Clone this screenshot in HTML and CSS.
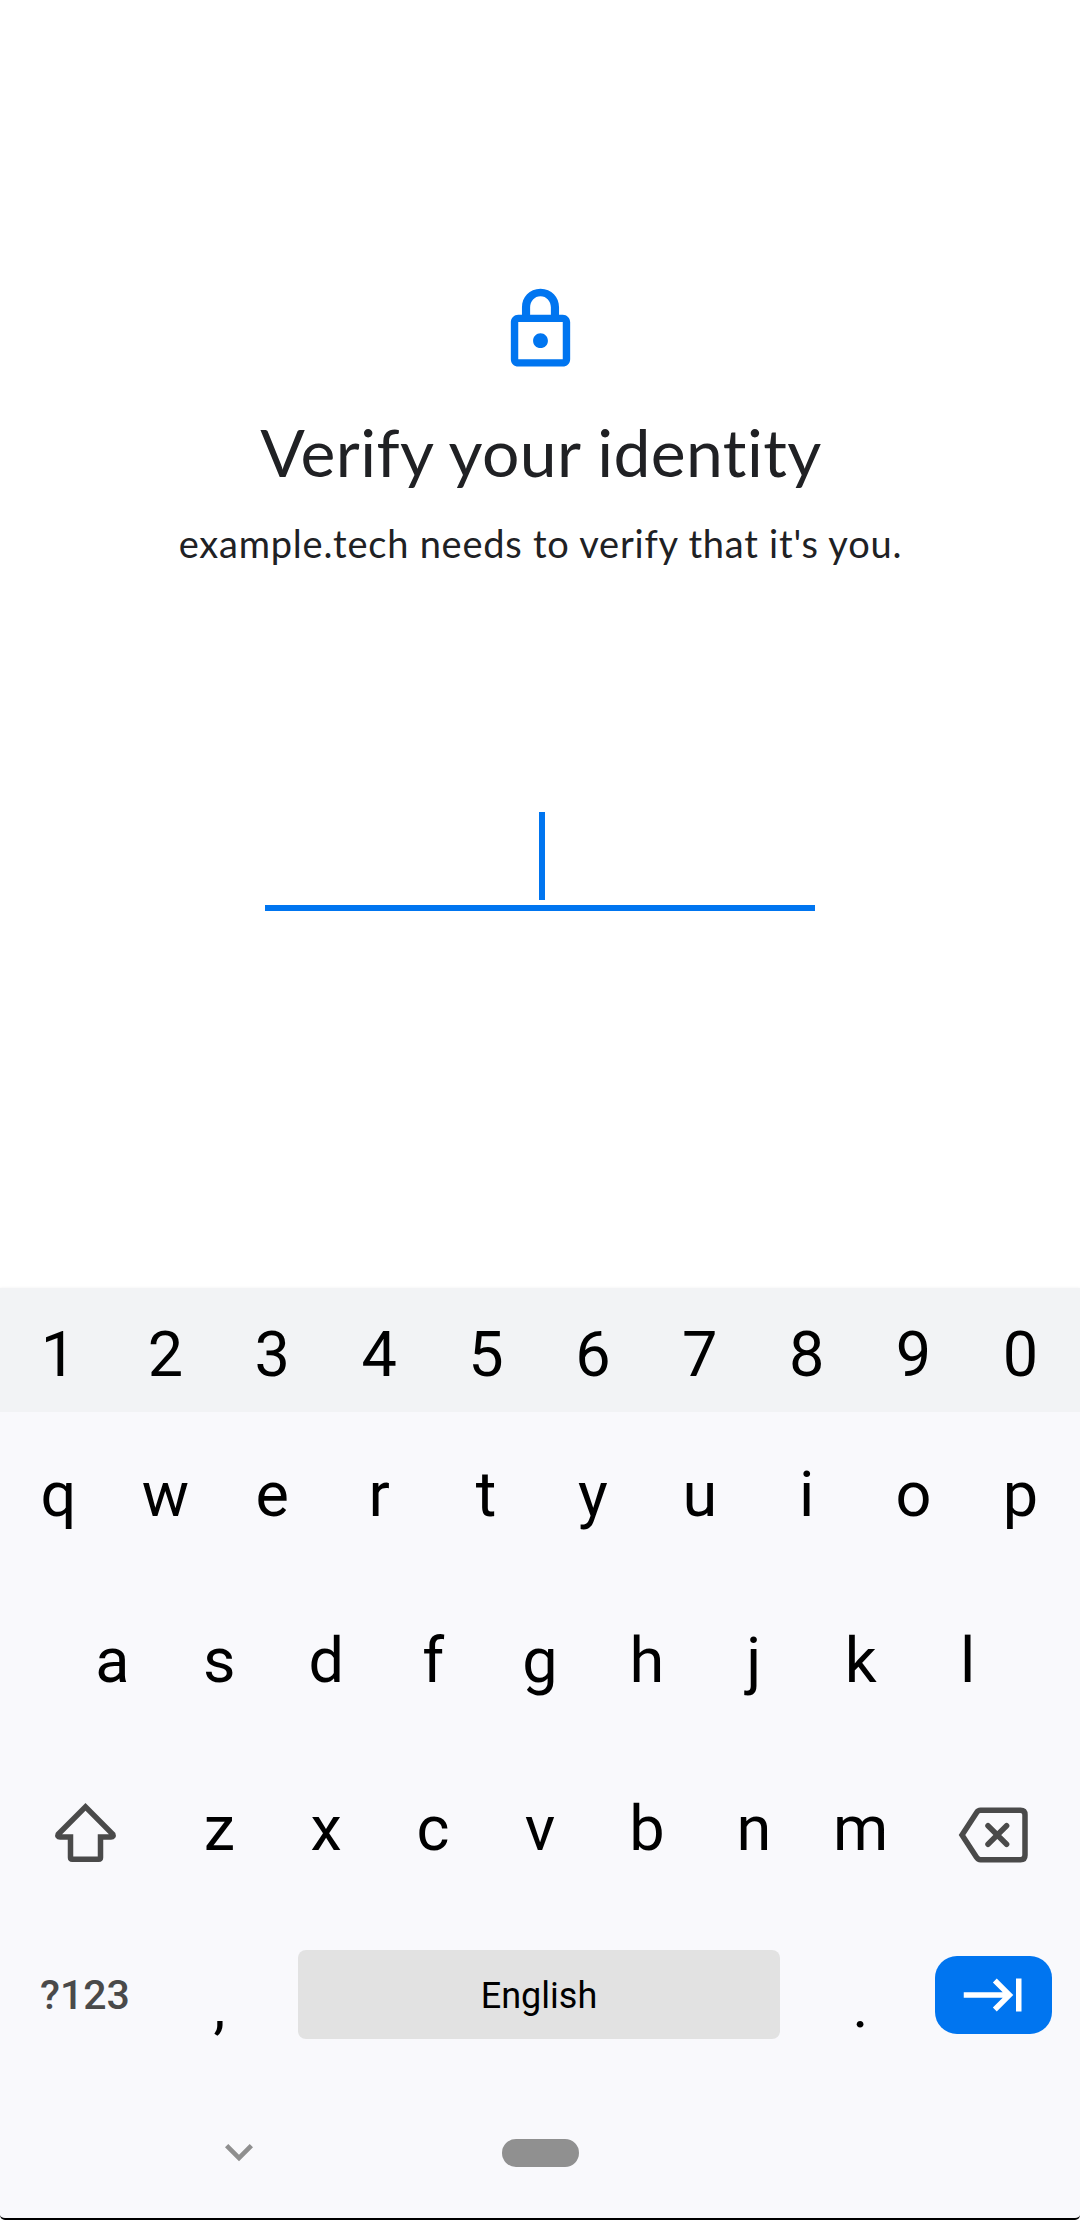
FILE: index.html
```html
<!DOCTYPE html>
<html lang="en">
<head>
<meta charset="utf-8">
<title>Verify your identity</title>
<link rel="stylesheet" href="styles.css">
</head>
<body>
<main class="prompt">
  <svg class="lock" viewBox="0 0 24 24"><path fill-rule="evenodd" d="M18 8h-1V6c0-2.760-2-5-5-5S7 3.240 7 6v2H6c-1.100 0-2 .9-2 2v10c0 1.100.9 2 2 2h12c1.100 0 2-.9 2-2V10c0-1.100-.9-2-2-2zM9.200 6c0-1.660 1.200-3 2.800-3s2.800 1.340 2.800 3v2H9.200V6zm8.800 14H6V10h12v10zm-6-3c1.100 0 2-.9 2-2s-.9-2-2-2-2 .9-2 2 .9 2 2 2z"/></svg>
  <h1 class="title">Verify your identity</h1>
  <p class="subtitle">example.tech needs to verify that it's you.</p>
  <div class="field"><span class="caret"></span></div>
</main>
<section class="keyboard">
  <div class="row numbers"><span>1</span><span>2</span><span>3</span><span>4</span><span>5</span><span>6</span><span>7</span><span>8</span><span>9</span><span>0</span></div>
  <div class="row top"><span>q</span><span>w</span><span>e</span><span>r</span><span>t</span><span>y</span><span>u</span><span>i</span><span>o</span><span>p</span></div>
  <div class="row home"><span>a</span><span>s</span><span>d</span><span>f</span><span>g</span><span>h</span><span>j</span><span>k</span><span>l</span></div>
  <div class="row lower">
    <div class="side"><svg class="shift" viewBox="0 0 64 64"><path d="M5.200 35.200 32.500 7.800 59.800 35.200Q61 38 58 38H47.500V58.500Q47.500 60.200 45.800 60.200H19.200Q17.500 60.200 17.500 58.500V38H7Q4 38 5.200 35.200Z"/></svg></div>
    <span>z</span><span>x</span><span>c</span><span>v</span><span>b</span><span>n</span><span>m</span>
    <div class="side"><svg class="erase" viewBox="0 0 72 58"><path d="M5 29 19.500 6.700Q21 4.300 23.500 4.300H63.500Q68 4.300 68 8.800V49.200Q68 53.700 63.500 53.700H23.500Q21 53.700 19.500 51.300ZM31 19.700 49.600 38.300M49.600 19.700 31 38.300"/></svg></div>
  </div>
  <div class="row bottom">
    <div class="symbols">?123</div>
    <div class="mark">,</div>
    <div class="space">English</div>
    <div class="mark">.</div>
    <div class="next"><svg viewBox="0 0 24 24"><path d="M11.590 7.410 15.170 11H1v2h14.170l-3.590 3.590L13 18l6-6-6-6zM20 6v12h2V6z"/></svg></div>
  </div>
  <div class="nav">
    <svg class="chevron" viewBox="0 0 24 24"><path d="M16.590 8.590 12 13.170 7.410 8.590 6 10l6 6 6-6z"/></svg>
    <div class="pill"></div>
  </div>
</section>
</body>
</html>
```
FILE: styles.css
```css
* { box-sizing: border-box; }
body {
  margin: 0;
  width: 1080px;
  height: 2220px;
  background: #fff;
  display: flex;
  flex-direction: column;
  overflow: hidden;
}
.prompt {
  height: 1288px;
  padding-top: 285px;
  display: flex;
  flex-direction: column;
  align-items: center;
  font-family: Lato, sans-serif;
  color: #202124;
}
.lock { width: 89px; height: 89px; fill: #0075f0; }
.title {
  margin: 38px 0 0;
  padding-left: 2px;
  font-size: 66px;
  line-height: 80px;
  font-weight: 400;
  letter-spacing: 0.4px;
  white-space: nowrap;
}
.subtitle {
  margin: 27px 0 0;
  padding-left: 1px;
  font-size: 38px;
  line-height: 48px;
  letter-spacing: 0.77px;
  white-space: nowrap;
}
.field {
  width: 550px;
  height: 99px;
  margin-top: 245px;
  padding-left: 4px;
  border-bottom: 6px solid #0075f0;
  display: flex;
  justify-content: center;
}
.caret { width: 6px; height: 88px; background: #0075f0; }
.keyboard {
  height: 932px;
  background: #f9f9fc;
  box-shadow: 0 0 3px rgba(0, 0, 0, 0.06);
  border-bottom: 2px solid #000;
  border-radius: 0 0 5px 5px;
  font-family: Roboto, sans-serif;
  font-size: 63px;
  color: #000;
}
.row { display: flex; align-items: center; padding: 0 5px; }
.row span { width: 106.9px; text-align: center; }
.numbers { height: 124px; padding-top: 9px; background: #f2f3f5; }
.top { height: 164px; }
.home { height: 169px; justify-content: center; }
.lower { height: 166px; justify-content: center; }
.side { width: 160px; display: flex; }
.side svg { fill: none; stroke: #4a4a4a; stroke-width: 5.500px; stroke-linecap: round; }
.shift { width: 64px; height: 64px; margin: 6px 0 0 47px; }
.erase { width: 72px; height: 58px; margin: 14px 0 0 43px; }
.bottom { height: 167px; }
.symbols {
  width: 160px;
  text-align: center;
  font-size: 41px;
  font-weight: 500;
  color: #4a4a4a;
}
.mark { width: 107px; padding: 24px 0 0 2px; text-align: center; font-size: 60px; }
.space {
  width: 482px;
  height: 89px;
  margin: 0 26px;
  border-radius: 8px;
  background: #e2e2e2;
  font-size: 36px;
  line-height: 93px;
  text-align: center;
}
.next {
  width: 117px;
  height: 78px;
  margin-left: 22px;
  border-radius: 22px;
  background: #0075f0;
  display: flex;
  align-items: center;
  justify-content: center;
}
.next svg { width: 66px; height: 66px; fill: #fff; }
.nav { height: 140px; padding: 10px 0 0 211px; display: flex; align-items: center; }
.chevron { width: 56px; height: 56px; margin-bottom: 2px; fill: #8f8f8f; }
.pill { width: 77px; height: 28px; margin-left: 235px; border-radius: 14px; background: #909090; }
```
